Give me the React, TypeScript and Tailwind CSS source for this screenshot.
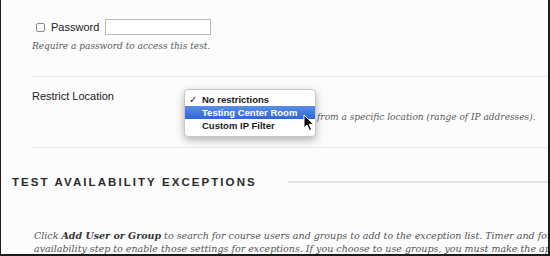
import React from 'react';

const sans = { fontFamily: '"Liberation Sans", "DejaVu Sans", sans-serif' };
const serif = { fontFamily: '"DejaVu Serif", "Liberation Serif", serif' };

const MenuCursor = () => (
  <svg className="absolute left-[302px] top-[114px]" width="12" height="18" viewBox="0 0 12 18">
    <path d="M1 1 L1 14 L4 11 L6.5 16.5 L8.5 15.6 L6.2 10.3 L10.5 10.3 Z" fill="#000" stroke="#fff" strokeWidth="1" strokeLinejoin="round" />
  </svg>
);

const LocationMenu = () => {
  const options = ['No restrictions', 'Testing Center Room', 'Custom IP Filter'];
  return (
    <div
      className="absolute left-[183px] top-[89px] w-[132px] rounded-[4px] border border-[#c8c8c8] bg-white pt-[3px] pb-[4px] shadow-[0_3px_8px_rgba(0,0,0,0.3)]"
      style={sans}
    >
      {options.map((opt, i) => (
        <div
          key={opt}
          className={`relative flex h-[13px] items-center pl-[17px] text-[9.5px] font-bold leading-none ${
            i === 1 ? 'bg-gradient-to-b from-[#5b8ee6] to-[#2f66d6] text-white' : 'text-[#1a1a1a]'
          }`}
        >
          {i === 0 && <span className="absolute left-[4px] text-[10px] font-normal">✓</span>}
          {opt}
        </div>
      ))}
    </div>
  );
};

export default function App() {
  return (
    <div className="relative h-[256px] w-[550px] overflow-hidden border-b-2 border-l border-r-2 border-[#1c1c1c] bg-[#fcfcfc]">
      <div className="pl-[31px] pt-[19px]">
        <div className="flex items-center" style={sans}>
          <span className="ml-[4px] h-[9px] w-[9px] rounded-[2px] border border-[#8a8a8a] bg-white" />
          <span className="ml-[6px] text-[11px] text-[#222]">Password</span>
          <span className="ml-[6px] h-[16px] w-[106px] border border-[#b9b9b9] bg-white" />
        </div>
        <p className="mt-[4px] text-[9px] italic leading-[12px] text-[#5a5a5a]" style={serif}>
          Require a password to access this test.
        </p>
        <div className="mt-[24px] border-t border-[#e8e8e8]" />
        <div className="flex pt-[12px]">
          <div className="w-[152px] text-[11px] leading-[14px] text-[#222]" style={sans}>
            Restrict Location
          </div>
          <div className="pt-[22px] pl-[133px] text-[9px] italic leading-[13px] whitespace-nowrap text-[#5a5a5a]" style={serif}>
            from a specific location (range of IP addresses).
          </div>
        </div>
        <div className="mt-[23px] border-t border-[#e8e8e8]" />
      </div>

      <div className="mt-[27px] flex items-center pl-[11px]">
        <h2 className="text-[11.5px] font-bold leading-[14px] tracking-[0.18em] whitespace-nowrap text-[#2a2a2a]" style={sans}>
          TEST AVAILABILITY EXCEPTIONS
        </h2>
        <div className="ml-[31px] h-[2px] flex-1 bg-[#e2e2e2]" />
      </div>

      <div className="mt-[40px] pl-[33px] text-[9.5px] italic leading-[13px] whitespace-nowrap text-[#555]" style={serif}>
        <div>
          Click <b className="text-[#333]">Add User or Group</b> to search for course users and groups to add to the exception list. Timer and force completion
        </div>
        <div>
          availability step to enable those settings for exceptions. If you choose to use groups, you must make the appropriate
        </div>
      </div>

      <LocationMenu />
      <MenuCursor />
    </div>
  );
}
